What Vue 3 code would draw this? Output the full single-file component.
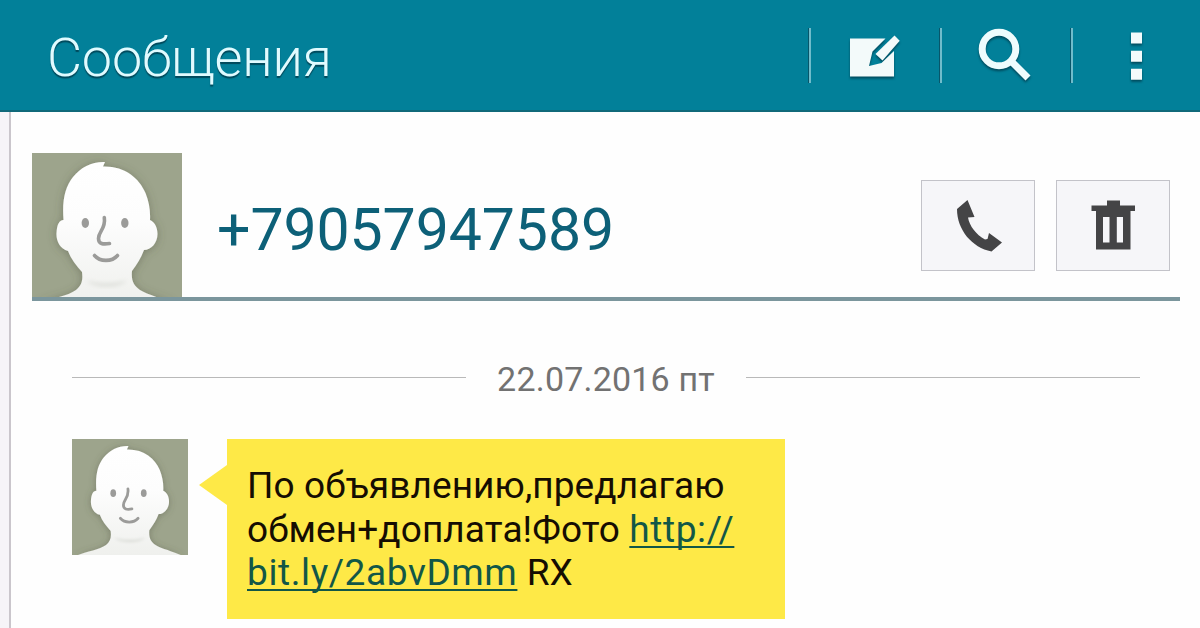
<template>
  <div class="screen">
    <svg class="symbols" width="0" height="0">
      <defs>
        <linearGradient id="faceFill" x1="0" y1="0" x2="0" y2="1">
          <stop offset="0" stop-color="#ffffff" />
          <stop offset="0.4" stop-color="#fdfdfd" />
          <stop offset="1" stop-color="#eff0ed" />
        </linearGradient>
        <filter id="faceShadow" x="-20%" y="-20%" width="140%" height="140%">
          <feDropShadow dx="0" dy="1" stdDeviation="5" flood-color="#4d5540" flood-opacity="0.45" />
        </filter>
        <filter id="chinBlur" x="-20%" y="-50%" width="140%" height="200%">
          <feGaussianBlur stdDeviation="2" />
        </filter>
        <symbol id="avatar" viewBox="0 0 150 150">
          <rect width="150" height="150" fill="#9da48c" />
          <path
            d="M5 151C20 145 36 143 44 137C50 132 51 127 50 119C44 112 39 106 36 98C28 96 24 88 24.500 80C25 72 27 67 31.500 67C30 47 33 34 41 24C49 14 60 8.500 73 9L71 13.500C93 13 107 25 113.500 40C117 49 118.500 57 118 67C123 69 125.500 75 125.500 81C125.500 90 119 97 112 97C109 105 105 111 100 118C99 128 102 133 108 137C116 142 130 145 143 151Z"
            fill="url(#faceFill)"
            filter="url(#faceShadow)"
          />
          <path d="M54 127C63 132 86 132 95 127C89 135 61 135 54 127Z" fill="#d3d5cf" filter="url(#chinBlur)" />
          <ellipse cx="53.300" cy="70" rx="3.700" ry="4.900" fill="#9b9b99" />
          <ellipse cx="92.800" cy="70" rx="3.700" ry="4.900" fill="#9b9b99" />
          <g fill="none" stroke="#9b9b99" stroke-width="3.600" stroke-linecap="round" stroke-linejoin="round">
            <path d="M72.300 64.500C74 76 66.500 78 66.500 85.500C66.500 91 71 91.500 77.500 90.500" />
            <path d="M62.500 102.500C68 109 80 109 85.500 102.500" />
          </g>
        </symbol>
      </defs>
    </svg>

    <header class="app-bar">
      <h1 class="app-title">Сообщения</h1>
      <div class="actions">
        <button class="action" aria-label="compose">
          <svg class="action-icon" viewBox="0 0 60 60" width="60" height="60">
            <path d="M4 12.500H39.500L26.500 25.500L23 40L35.500 37L48 25V50.500H4Z" fill="#f3fafa" />
            <path d="M29.500 28L48.500 9.500L53.700 14.700L36.500 34.500Z" fill="#f3fafa" />
          </svg>
        </button>
        <button class="action" aria-label="search">
          <svg class="action-icon" viewBox="0 0 60 60" width="60" height="60">
            <circle cx="22" cy="23" r="16.800" fill="none" stroke="#eefcfd" stroke-width="7" />
            <path d="M34.500 35.500L51 52" stroke="#eefcfd" stroke-width="7" />
          </svg>
        </button>
        <button class="action" aria-label="menu">
          <svg class="action-icon" viewBox="0 0 60 60" width="60" height="60">
            <path d="M23 6.500h11v11h-11zM23 24.700h11v11h-11zM23 42.700h11v11h-11z" fill="#f3fbfc" />
          </svg>
        </button>
      </div>
    </header>

    <main class="conversation">
      <section class="contact">
        <div class="contact-avatar">
          <svg width="150" height="150"><use href="#avatar" /></svg>
        </div>
        <div class="contact-number">{{ phone }}</div>
        <div class="contact-buttons">
          <button class="contact-btn" aria-label="call">
            <svg viewBox="0 0 50 56" width="50" height="56">
              <path
                d="M14.500 2L21.500 19L15 19.500C16.500 28 23 36.500 32 41.500L34.500 41L36 35L49 44.500L38.500 53.500C19 49.500 4 32 4 11Z"
                fill="#444446"
              />
            </svg>
          </button>
          <button class="contact-btn" aria-label="delete">
            <svg viewBox="0 0 50 56" width="50" height="56">
              <path
                d="M19 2.500H32V7.500H47V13H42.500V51.500H8V13H3.500V7.500H19ZM15 19V44.500H21.500V19ZM28.800 19V44.500H35V19Z"
                fill="#444446"
                fill-rule="evenodd"
              />
            </svg>
          </button>
        </div>
      </section>

      <div class="date-row">
        <span class="date-line"></span>
        <span class="date-text">{{ date }}</span>
        <span class="date-line"></span>
      </div>

      <div class="message">
        <svg class="message-avatar" width="116" height="116"><use href="#avatar" /></svg>
        <div class="bubble">
          <p class="line">По объявлению,предлагаю</p>
          <p class="line">обмен+доплата!Фото <a class="link">http://</a></p>
          <p class="line"><a class="link">bit.ly/2abvDmm</a> RX</p>
        </div>
      </div>
    </main>
  </div>
</template>

<script setup>
import { ref } from 'vue'

const phone = ref('+79057947589')
const date = ref('22.07.2016 пт')
</script>

<style>
body {
  margin: 0;
  background: #fefefe;
}
</style>

<style scoped>
.screen {
  width: 1200px;
  height: 628px;
  overflow: hidden;
  display: flex;
  flex-direction: column;
  background: #fefefe;
  font-family: Roboto, "Noto Sans", sans-serif;
}

.symbols {
  position: absolute;
}

.app-bar {
  box-sizing: border-box;
  height: 112px;
  flex-shrink: 0;
  display: flex;
  align-items: center;
  justify-content: space-between;
  padding-left: 47px;
  background: #028099;
  border-bottom: 2px solid #10697a;
}

.app-title {
  margin: 5px 0 0;
  font-size: 54px;
  line-height: 64px;
  font-weight: 300;
  letter-spacing: -0.2px;
  white-space: nowrap;
  color: #e0fbff;
  text-shadow: 0 2px 1px rgba(0, 50, 65, 0.7);
}

.actions {
  display: flex;
  width: 391px;
  margin-top: 1px;
}

.action {
  box-sizing: border-box;
  width: 131px;
  height: 55px;
  flex-shrink: 0;
  padding: 0;
  border: none;
  border-left: 2px solid #70bccb;
  box-shadow: -1px 0 0 #07566a;
  background: transparent;
  display: flex;
  align-items: center;
  justify-content: center;
}

.action-icon {
  flex-shrink: 0;
  filter: drop-shadow(0 2px 1px rgba(0, 45, 60, 0.65));
}

.conversation {
  flex: 1;
  min-height: 0;
  margin-left: 9px;
  border-left: 2px solid #cac6cc;
  box-shadow: -9px 0 0 #f6f4f8;
  padding: 41px 20px 0 21px;
}

.contact {
  height: 144px;
  display: flex;
  align-items: flex-start;
  border-bottom: 4px solid #7b969d;
}

.contact-avatar {
  width: 150px;
  height: 144px;
  overflow: hidden;
}

.contact-number {
  margin: 42px 0 0 35px;
  font-size: 59px;
  line-height: 70px;
  letter-spacing: -0.1px;
  white-space: nowrap;
  color: #0d6078;
}

.contact-buttons {
  display: flex;
  gap: 21px;
  margin: 27px 10px 0 auto;
}

.contact-btn {
  box-sizing: border-box;
  width: 114px;
  height: 91px;
  padding: 0;
  border: 1px solid #c3c3c9;
  background: #f6f6f9;
  display: flex;
  align-items: center;
  justify-content: center;
}

.date-row {
  display: flex;
  align-items: center;
  margin: 58px 40px 0;
  height: 40px;
}

.date-line {
  width: 394px;
  height: 1px;
  margin-top: -4px;
  background: #b9b9b9;
}

.date-text {
  flex: 1;
  text-align: center;
  font-size: 34px;
  line-height: 40px;
  letter-spacing: 0.2px;
  white-space: nowrap;
  color: #727272;
}

.message {
  display: flex;
  align-items: flex-start;
  gap: 39px;
  margin: 40px 0 0 40px;
}

.message-avatar {
  flex-shrink: 0;
}

.bubble {
  position: relative;
  box-sizing: border-box;
  width: 558px;
  height: 180px;
  padding: 25px 0 0 20px;
  background: #fee947;
}

.bubble::before {
  content: "";
  position: absolute;
  left: -28px;
  top: 26px;
  border-style: solid;
  border-width: 20px 28px 20px 0;
  border-color: transparent #fee947 transparent transparent;
}

.line {
  margin: 0;
  font-size: 37px;
  line-height: 43.5px;
  letter-spacing: 0.1px;
  white-space: nowrap;
  color: #150d02;
}

.link {
  letter-spacing: 0.6px;
  color: #125747;
  text-decoration: underline;
  text-decoration-thickness: 2px;
  text-decoration-skip-ink: none;
  text-underline-offset: 4px;
}
</style>
